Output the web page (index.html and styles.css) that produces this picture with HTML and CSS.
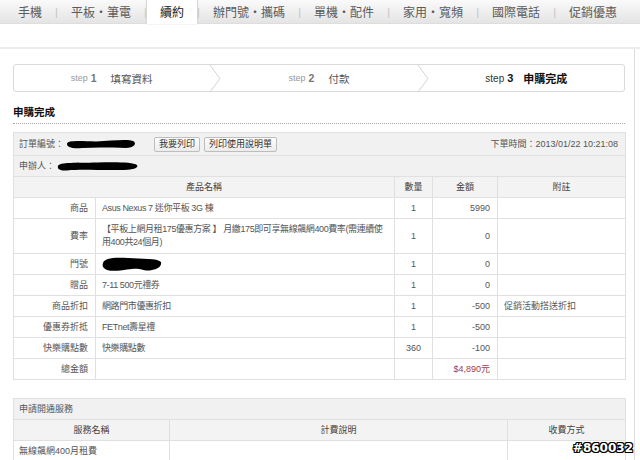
FILE: index.html
```html
<!DOCTYPE html>
<html lang="zh-Hant">
<head>
<meta charset="utf-8">
<title>申購完成</title>
<link rel="stylesheet" href="styles.css">
</head>
<body>
<div class="page">
  <nav class="nav">
    <a class="nav-item first">手機</a><span class="sep">|</span>
    <a class="nav-item">平板・筆電</a><span class="sep">|</span>
    <a class="nav-item active">續約</a><span class="sep">|</span>
    <a class="nav-item">辦門號・攜碼</a><span class="sep">|</span>
    <a class="nav-item">單機・配件</a><span class="sep">|</span>
    <a class="nav-item">家用・寬頻</a><span class="sep">|</span>
    <a class="nav-item">國際電話</a><span class="sep">|</span>
    <a class="nav-item">促銷優惠</a>
  </nav>
  <div class="subbar"></div>

  <main class="content">
    <div class="steps">
      <div class="step"><span class="s-word">step</span><span class="s-num">1</span><span class="s-label">填寫資料</span></div>
      <svg class="chev" width="12" height="27" viewBox="0 0 12 27"><polyline points="1,0 11,13.5 1,27" fill="none" stroke="#d4d4d4" stroke-width="1"/></svg>
      <div class="step"><span class="s-word">step</span><span class="s-num">2</span><span class="s-label">付款</span></div>
      <svg class="chev" width="12" height="27" viewBox="0 0 12 27"><polyline points="1,0 11,13.5 1,27" fill="none" stroke="#d4d4d4" stroke-width="1"/></svg>
      <div class="step current"><span class="s-word">step</span><span class="s-num">3</span><span class="s-label">申購完成</span></div>
    </div>

    <h2 class="title">申購完成</h2>

    <table class="order">
      <colgroup>
        <col class="c-label"><col class="c-name"><col class="c-qty"><col class="c-amt"><col class="c-note">
      </colgroup>
      <tr class="info info-top">
        <td colspan="5">
          <div class="info-row">
            <span class="info-left">訂單編號：<svg class="blot" width="70" height="12" viewBox="0 0 70 12"><path d="M1,6 C1,2 14,3 30,3.5 C46,3 62,0.5 68,3.5 C70.5,6 68,10 60,10 C46,9.5 30,9 16,10 C6,11 1,9 1,6 Z" fill="#000"/></svg>
              <button class="btn btn-first">我要列印</button><button class="btn">列印使用說明單</button>
            </span>
            <span class="info-right">下單時間：2013/01/22 10:21:08</span>
          </div>
        </td>
      </tr>
      <tr class="info">
        <td colspan="5">申辦人：<svg class="blot" width="82" height="12" viewBox="0 0 82 12"><path d="M1,6 C2,2 20,3 40,2.5 C58,2 76,2 80,5 C82,8 76,10 62,10 C44,10.5 24,9 10,10.5 C3,11 0,9 1,6 Z" fill="#000"/></svg></td>
      </tr>
      <tr class="head">
        <th colspan="2">產品名稱</th><th>數量</th><th>金額</th><th>附註</th>
      </tr>
      <tr>
        <td class="lbl">商品</td><td class="name">Asus Nexus 7 迷你平板 3G 棟</td><td class="qty">1</td><td class="amt">5990</td><td class="note"></td>
      </tr>
      <tr class="tall">
        <td class="lbl">費率</td><td class="name">【平板上網月租175優惠方案 】 月繳175即可享無線飆網400費率(需連續使用400共24個月)</td><td class="qty">1</td><td class="amt">0</td><td class="note"></td>
      </tr>
      <tr>
        <td class="lbl">門號</td><td class="name"><svg class="blot-num" width="60" height="17" viewBox="0 0 60 17"><path d="M1,7 C2,2 12,1 26,2 C40,3 55,2 59,6 C60,10 56,13 50,14 C42,16 40,12 30,13 C20,14 12,16 5,14 C1,12 0,10 1,7 Z" fill="#000"/></svg></td><td class="qty">1</td><td class="amt">0</td><td class="note"></td>
      </tr>
      <tr>
        <td class="lbl">贈品</td><td class="name">7-11 500元禮券</td><td class="qty">1</td><td class="amt">0</td><td class="note"></td>
      </tr>
      <tr>
        <td class="lbl">商品折扣</td><td class="name">網路門市優惠折扣</td><td class="qty">1</td><td class="amt">-500</td><td class="note">促銷活動搭送折扣</td>
      </tr>
      <tr>
        <td class="lbl">優惠券折抵</td><td class="name">FETnet壽星禮</td><td class="qty">1</td><td class="amt">-500</td><td class="note"></td>
      </tr>
      <tr>
        <td class="lbl">快樂購點數</td><td class="name">快樂購點數</td><td class="qty">360</td><td class="amt">-100</td><td class="note"></td>
      </tr>
      <tr>
        <td class="lbl">總金額</td><td class="name"></td><td class="qty"></td><td class="amt total">$4,890元</td><td class="note"></td>
      </tr>
    </table>

    <table class="service">
      <colgroup><col class="s-c1"><col class="s-c2"><col class="s-c3"></colgroup>
      <tr class="info"><td colspan="3">申請開通服務</td></tr>
      <tr class="head"><th>服務名稱</th><th>計費說明</th><th>收費方式</th></tr>
      <tr><td class="svc">無線飆網400月租費</td><td></td><td></td></tr>
    </table>
  </main>
  <div class="watermark">#860032</div>
</div>
</body>
</html>
```
FILE: styles.css
```css
* { box-sizing: border-box; }
html, body { margin: 0; padding: 0; background: #fff; }
body {
  font-family: "Liberation Sans", "Noto Sans CJK TC", sans-serif;
  color: #555;
  font-size: 9px;
}
.page { position: relative; width: 640px; height: 460px; overflow: hidden; }

/* top navigation */
.nav {
  display: flex;
  align-items: center;
  height: 24px;
  padding-left: 5px;
  background: linear-gradient(#fafafa, #e4e4e4);
  border-bottom: 1px solid #dedede;
}
.nav-item {
  display: flex;
  align-items: center;
  height: 24px;
  padding: 0 13px;
  font-size: 12px;
  color: #5a5a5a;
  white-space: nowrap;
}
.nav-item.active {
  background: #fff;
  color: #222;
  box-shadow: -1px 0 1px #d8d8d8, 1px 0 1px #d8d8d8;
}
.sep { font-size: 11px; color: #c4c4c4; width: 3px; text-align: center; }

.subbar {
  height: 25px;
  border-bottom: 2px solid #ececec;
}

.content {
  width: 635px;
  padding: 15px 9px 0 13px;
  border-right: 1px solid #dcdcdc;
}

/* steps */
.steps {
  display: flex;
  height: 28px;
  border: 1px solid #dadada;
  border-radius: 3px;
  background: #fff;
}
.step {
  flex: 1;
  display: flex;
  align-items: center;
  justify-content: center;
  color: #555;
}
.chev { flex: none; display: block; }
.s-word { font-size: 9px; color: #999; }
.s-num { font-size: 10.5px; font-weight: bold; color: #777; margin-left: 3px; }
.s-label { font-size: 10.5px; color: #555; margin-left: 14px; }
.step.current .s-word { color: #333; font-size: 10px; }
.step.current .s-num { color: #111; font-size: 11px; }
.step.current .s-label { color: #111; font-weight: bold; font-size: 11px; margin-left: 10px; }

.title {
  margin: 11px 0 0;
  font-size: 10.5px;
  line-height: 18px;
  color: #111;
  font-weight: bold;
  padding-bottom: 2px;
  border-bottom: 1px dotted #aaa;
}

/* tables */
table {
  width: 612px;
  border-collapse: collapse;
  table-layout: fixed;
}
td, th {
  border: 1px solid #e0e0e0;
  padding: 0 6px;
  font-size: 9px;
  font-weight: normal;
  line-height: 13px;
  height: 21px;
  vertical-align: middle;
  color: #555;
}
.order { margin-top: 8px; }
.c-label { width: 82px; }
.c-name { width: 299px; }
.c-qty { width: 38px; }
.c-amt { width: 65px; }
.c-note { width: 128px; }

.info td { background: #f1f1f1; padding-left: 5px; height: 21px; }
.info-top td { height: 23px; }
.info-row { display: flex; justify-content: space-between; align-items: center; }
.info-left { display: flex; align-items: center; }
.info-right { color: #555; padding-right: 1px; }
.blot { display: inline-block; vertical-align: middle; margin-left: 2px; }
.blot-num { display: block; }
.btn {
  height: 15px;
  padding: 0 4px;
  border: 1px solid #bdbdbd;
  border-radius: 2px;
  background: linear-gradient(#fdfdfd, #ececec);
  font-family: inherit;
  font-size: 9px;
  line-height: 12px;
  color: #333;
}
.btn-first { margin-left: 18px; margin-right: 4px; }

.head th { background: #f3f3f3; color: #444; text-align: center; }

.lbl { text-align: right; padding-right: 7px; }
.name { text-align: left; letter-spacing: -0.4px; }
.qty { text-align: center; padding: 0; }
.amt { text-align: right; padding-right: 7px; }
.note { text-align: left; }
.tall td { height: 35px; }
.total { color: #a33b48; }

.service { margin-top: 18px; }
.s-c1 { width: 156px; }
.s-c2 { width: 338px; }
.s-c3 { width: 118px; }
.svc { padding-left: 5px; }

.watermark {
  position: absolute;
  right: 7px;
  top: 441px;
  font-family: "DejaVu Sans", sans-serif;
  font-weight: bold;
  font-size: 12px;
  color: #fff;
  text-shadow: -1px -1px 0 #000, 1px -1px 0 #000, -1px 1px 0 #000, 1px 1px 0 #000, 0 1px 0 #000, 0 -1px 0 #000, 1px 0 0 #000, -1px 0 0 #000;
}
```
